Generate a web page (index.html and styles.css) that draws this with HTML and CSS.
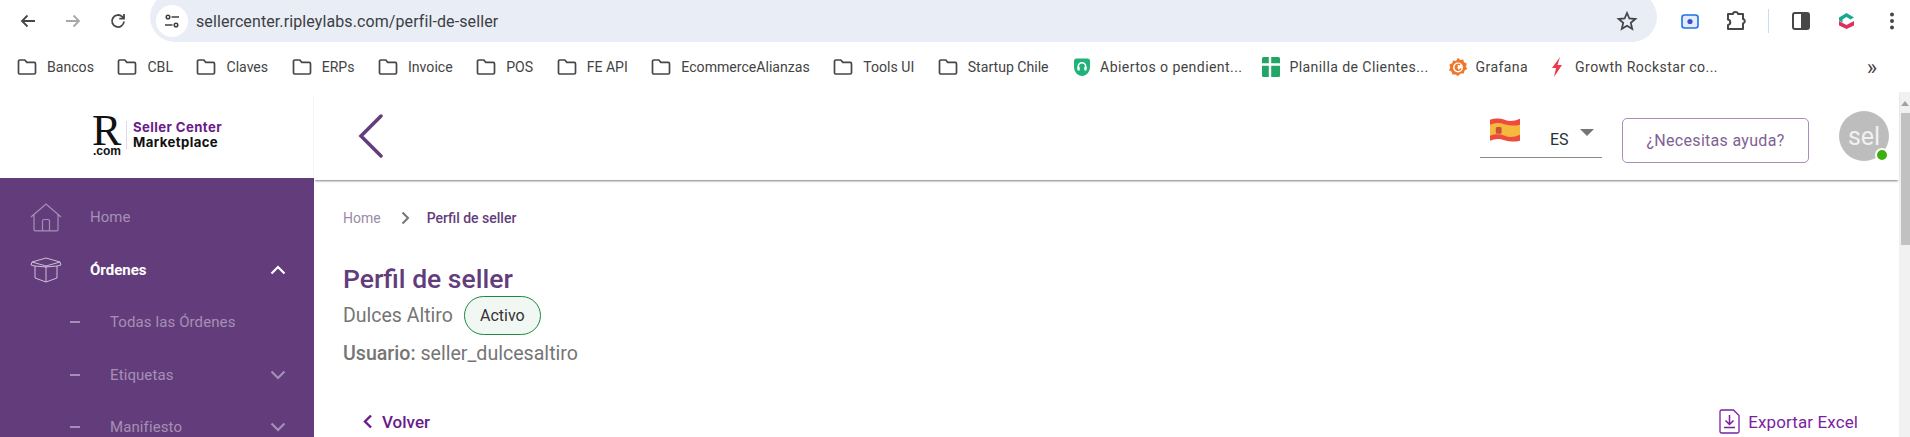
FILE: index.html
```html
<!DOCTYPE html>
<html lang="es">
<head>
    <meta charset="UTF-8">
    <title>Perfil de seller</title>
    <link rel="stylesheet" href="styles.css">
</head>
<body>
    <svg class="defs" width="0" height="0">
        <symbol id="folder" viewBox="0 0 20 18">
            <path d="M2.800 2h5l2 2.400h7.400c.7 0 1.300.6 1.300 1.300v9c0 .7-.6 1.300-1.300 1.300H2.800c-.7 0-1.300-.6-1.300-1.300V3.300C1.500 2.600 2.100 2 2.800 2z" fill="none" stroke="#474747" stroke-width="1.700"/>
        </symbol>
    </svg>

    <header class="browser">
        <div class="toolbar">
            <div class="nav-btns">
                <svg width="18" height="18" viewBox="0 0 18 18"><path d="M16 9H3M8.500 3.500 3 9l5.500 5.500" fill="none" stroke="#474747" stroke-width="1.800"/></svg>
                <svg width="18" height="18" viewBox="0 0 18 18"><path d="M2 9h13M9.500 3.500 15 9l-5.500 5.500" fill="none" stroke="#a8a8a8" stroke-width="1.800"/></svg>
                <svg width="18" height="18" viewBox="0 0 18 18"><path d="M15 9.500A6 6 0 1 1 13.200 4.700L15 6.500M15 2v4.700h-4.700" fill="none" stroke="#474747" stroke-width="1.800"/></svg>
            </div>
            <div class="omnibox">
                <span class="site-info">
                    <svg width="16" height="16" viewBox="0 0 16 16"><g fill="none" stroke="#3c4043" stroke-width="1.500"><circle cx="4" cy="4" r="1.800"/><path d="M7.500 4H15M1 12h7.500"/><circle cx="12" cy="12" r="1.800"/></g></svg>
                </span>
                <span class="url">sellercenter.ripleylabs.com/perfil-de-seller</span>
                <svg class="star" width="22" height="22" viewBox="0 0 22 22"><path d="m11 3 2.400 5.500 6 .5-4.600 3.900 1.400 5.900L11 15.700l-5.200 3.100 1.400-5.900L2.600 9l6-.5z" fill="none" stroke="#474747" stroke-width="1.800"/></svg>
            </div>
            <div class="ext-icons">
                <svg class="ext-cam" width="18" height="15" viewBox="0 0 18 15"><rect x="1" y="1" width="16" height="13" rx="2.500" fill="#e4ebfb" stroke="#1a73e8" stroke-width="1.600"/><circle cx="9" cy="7.500" r="2.600" fill="#3f51c8"/></svg>
                <svg class="ext-puzzle" width="22" height="20" viewBox="0 0 22 20"><path d="M3 3h5a2.500 2 0 0 1 5 0h5v5a2.300 2.300 0 0 1 0 4.500V18H3v-4a2.800 2.800 0 0 0 0-5.500z" fill="none" stroke="#474747" stroke-width="2" stroke-linejoin="round"/></svg>
                <span class="ext-sep"></span>
                <svg class="ext-panel" width="18" height="18" viewBox="0 0 18 18"><rect x="1" y="1" width="16" height="16" rx="2" fill="#fff" stroke="#474747" stroke-width="2"/><rect x="9" y="1" width="8" height="16" fill="#474747"/></svg>
                <svg class="ext-logo" width="17" height="18" viewBox="0 0 17 18"><path d="M1 5.500 8.500 1 16 5.500l-3.500 2-4-2.400-4 2.400v3L1 8.500z" fill="#1aa88e"/><path d="M1 9v4.500L8.500 17l7.500-3.500V9l-7.500 4z" fill="#e0305f"/></svg>
                <svg class="ext-dots" width="6" height="18" viewBox="0 0 6 18"><g fill="#474747"><circle cx="3" cy="2.500" r="2"/><circle cx="3" cy="9" r="2"/><circle cx="3" cy="15.500" r="2"/></g></svg>
            </div>
        </div>
        <nav class="bookmarks">
            <a class="bm"><svg><use href="#folder"/></svg>Bancos</a>
            <a class="bm"><svg><use href="#folder"/></svg>CBL</a>
            <a class="bm"><svg><use href="#folder"/></svg>Claves</a>
            <a class="bm"><svg><use href="#folder"/></svg>ERPs</a>
            <a class="bm"><svg><use href="#folder"/></svg>Invoice</a>
            <a class="bm"><svg><use href="#folder"/></svg>POS</a>
            <a class="bm"><svg><use href="#folder"/></svg>FE API</a>
            <a class="bm"><svg><use href="#folder"/></svg>EcommerceAlianzas</a>
            <a class="bm"><svg><use href="#folder"/></svg>Tools UI</a>
            <a class="bm"><svg><use href="#folder"/></svg>Startup Chile</a>
            <a class="bm bm-site"><svg viewBox="0 0 20 20"><path d="M2 4c0-1.500 1-2.500 2.500-2.500h11C17 1.500 18 2.500 18 4v6c0 5-4 9-8 9s-8-4-8-9z" fill="#20b27a"/><path d="M6.300 12V9.500a3.700 3.700 0 0 1 7.400 0V12" fill="none" stroke="#fff" stroke-width="1.600"/><rect x="5.500" y="10" width="2.200" height="3.500" fill="#fff"/><rect x="12.300" y="10" width="2.200" height="3.500" fill="#fff"/></svg>Abiertos o pendient...</a>
            <a class="bm bm-site"><svg viewBox="0 0 20 20"><rect x="1" y="0" width="18" height="20" rx="1.500" fill="#23a566"/><path d="M1 7.500h18M9 0v20" stroke="#fff" stroke-width="2.400"/></svg>Planilla de Clientes...</a>
            <a class="bm bm-site"><svg viewBox="0 0 20 20"><path d="m10 .8 2.200 2.200 3-.6.800 2.800 2.800 1.300-.8 2.900 1.200 2.700-2.600 1.500-.8 2.900-3-.1L10 19l-2.600-1.500-3 .1-.8-2.900L1 13.200l1.200-2.800-.8-2.800 2.800-1.300.8-2.800 3 .5z" fill="#f0772a"/><circle cx="10" cy="10.500" r="5" fill="#fff"/><path d="M13 11.500a3 3 0 1 1-1-3.600M10 12a1.500 1.500 0 0 1 0-3" fill="none" stroke="#f0772a" stroke-width="1.500"/></svg>Grafana</a>
            <a class="bm bm-site"><svg viewBox="0 0 20 20"><path d="M13 0 5 11h4l-2 9 8-12h-4.500z" fill="#f0384c"/></svg>Growth Rockstar co...</a>
            <span class="bm-more">»</span>
        </nav>
    </header>

    <div class="app">
        <aside class="sidebar">
            <div class="brand">
                <svg class="brand-mark" width="30" height="60" viewBox="0 0 30 60">
                    <text class="brand-r" x="-1" y="40">R</text>
                    <text class="brand-com" x="0" y="50">.com</text>
                </svg>
                <i class="brand-sep"></i>
                <div class="brand-text">
                    <span class="brand-sc">Seller Center</span>
                    <span class="brand-mp">Marketplace</span>
                </div>
            </div>
            <ul class="menu">
                <li class="menu-item">
                    <svg class="menu-icon" width="32" height="29" viewBox="0 0 32 29"><path d="M1 14 16 1l15 13M4 12v14.500c0 .8.500 1.300 1.300 1.300h21.400c.8 0 1.300-.5 1.300-1.300V12M12.500 28V18a1.500 1.500 0 0 1 1.500-1.500h4a1.500 1.500 0 0 1 1.500 1.500v10" fill="none" stroke="#a68fb6" stroke-width="1.200"/></svg>
                    <span>Home</span>
                </li>
                <li class="menu-item is-open">
                    <svg class="menu-icon" width="32" height="26" viewBox="0 0 32 26"><path d="M16 1 30 5 16 9 2 5zM5 9v12l11 4 11-4V9M16 9v16M2 5 1 8l4 1 11 1 11-1 4-1-1-3" fill="none" stroke="#d8cde0" stroke-width=".9"/></svg>
                    <span>Órdenes</span>
                    <svg class="chev" width="16" height="10" viewBox="0 0 16 10"><path d="m1.500 8.500 6.500-6.500 6.500 6.500" fill="none" stroke="#fff" stroke-width="2.200"/></svg>
                </li>
                <li class="menu-item sub"><i class="dash"></i><span>Todas las Órdenes</span></li>
                <li class="menu-item sub"><i class="dash"></i><span>Etiquetas</span>
                    <svg class="chev" width="16" height="10" viewBox="0 0 16 10"><path d="m1.500 1.500 6.500 6.500 6.500-6.500" fill="none" stroke="#a68fb6" stroke-width="2.200"/></svg>
                </li>
                <li class="menu-item sub"><i class="dash"></i><span>Manifiesto</span>
                    <svg class="chev" width="16" height="10" viewBox="0 0 16 10"><path d="m1.500 1.500 6.500 6.500 6.500-6.500" fill="none" stroke="#a68fb6" stroke-width="2.200"/></svg>
                </li>
            </ul>
        </aside>

        <div class="content">
            <div class="topbar">
                <svg class="back" width="26" height="44" viewBox="0 0 26 44"><path d="M23 2 3 22l20 20" fill="none" stroke="#633d7b" stroke-width="3.500" stroke-linecap="round"/></svg>
                <div class="lang">
                    <svg class="flag" width="30" height="24" viewBox="0 0 31 24"><path d="M0 2q8-3 15 0t16-1v21q-8 3-16 0T0 22z" fill="#f5b93c"/><path d="M0 1.500q8-3 15 0t16-1v6q-8 2-16-.5T0 6.500zM0 18q8-3 15 0t16-1v6q-8 2-16-.5T0 23z" fill="#ee4a3f"/><rect x="6" y="9" width="6" height="7" rx="1.500" fill="#c9503d"/></svg>
                    <span class="lang-code">ES</span>
                    <i class="lang-caret"></i>
                </div>
                <button class="help-btn">¿Necesitas ayuda?</button>
                <div class="avatar">sel<i class="avatar-dot"></i></div>
            </div>

            <main class="page">
                <div class="crumbs">
                    <span class="crumb-home">Home</span>
                    <svg width="9" height="14" viewBox="0 0 9 14"><path d="m1.500 1.500 5.500 5.500-5.500 5.500" fill="none" stroke="#757575" stroke-width="2"/></svg>
                    <span class="crumb-now">Perfil de seller</span>
                </div>
                <h1>Perfil de seller</h1>
                <div class="seller-row">
                    <span class="seller-name">Dulces Altiro</span>
                    <span class="badge">Activo</span>
                </div>
                <p class="seller-user"><strong>Usuario:</strong> seller_dulcesaltiro</p>
                <div class="actions">
                    <a class="volver">
                        <svg width="10" height="15" viewBox="0 0 10 15"><path d="M8 1.500 2 7.500l6 6" fill="none" stroke="#6a1b8a" stroke-width="2.400"/></svg>
                        Volver
                    </a>
                    <a class="export">
                        <svg width="21" height="25" viewBox="0 0 21 25"><path d="M2.500 1h12l5.500 5.500v16c0 .8-.7 1.500-1.500 1.500h-16c-.8 0-1.500-.7-1.500-1.500v-20C1 1.700 1.700 1 2.500 1z" fill="none" stroke="#7a1fa2" stroke-width="1.300"/><path d="M10.500 6v9M6.500 11.500l4 4 4-4M5 18.500h11" fill="none" stroke="#7a1fa2" stroke-width="1.500"/></svg>
                        Exportar Excel
                    </a>
                </div>
            </main>
        </div>

        <div class="scrollbar">
            <i class="scroll-up"></i>
            <i class="scroll-thumb"></i>
        </div>
    </div>
</body>
</html>
```

FILE: styles.css
```css
* {
    box-sizing: border-box;
}
html, body {
    margin: 0;
    height: 437px;
    overflow: hidden;
}
body {
    font-family: Roboto, "Liberation Sans", sans-serif;
    background: #fff;
    display: flex;
    flex-direction: column;
}
.defs {
    position: absolute;
}

/* browser chrome */
.browser {
    height: 92px;
    flex: none;
    background: #fff;
}
.toolbar {
    height: 42px;
    display: flex;
    align-items: center;
    padding-left: 19px;
    overflow: hidden;
}
.nav-btns {
    width: 131px;
    display: flex;
    gap: 27px;
}
.omnibox {
    width: 1507px;
    height: 50px;
    flex: none;
    margin-top: -8px;
    margin-bottom: -8px;
    padding: 8px 19px 0 6px;
    background: #e9edf6;
    border-radius: 25px;
    display: flex;
    align-items: center;
    position: relative;
    top: -4px;
}
.site-info {
    width: 32px;
    height: 32px;
    border-radius: 50%;
    background: #fff;
    display: flex;
    align-items: center;
    justify-content: center;
}
.url {
    flex: 1;
    margin-left: 8px;
    font-size: 16px;
    letter-spacing: .1px;
    color: #3c4043;
}
.ext-icons {
    flex: 1;
    display: flex;
    align-items: center;
    padding-left: 24px;
}
.ext-puzzle {
    margin-left: 26px;
}
.ext-sep {
    width: 1px;
    height: 24px;
    background: #c9dcf7;
    margin: 0 23px 0 21px;
}
.ext-logo {
    margin-left: 28px;
}
.ext-dots {
    margin-left: 34px;
}
.bookmarks {
    height: 50px;
    display: flex;
    align-items: center;
    padding-left: 17px;
    font-size: 14.100px;
    color: #444;
    position: relative;
}
.bm {
    display: flex;
    align-items: center;
    gap: 10px;
    margin-right: 23.500px;
    white-space: nowrap;
}
.bm svg {
    width: 20px;
    height: 18px;
}
.bm-site {
    gap: 8px;
    margin-right: 19px;
    letter-spacing: .4px;
}
.bm-site svg {
    height: 20px;
}
.bm-more {
    margin-left: auto;
    margin-right: 33px;
    font-size: 22px;
    color: #444;
}

/* app layout */
.app {
    flex: 1;
    display: flex;
    min-height: 0;
}
.sidebar {
    width: 314px;
    flex: none;
    display: flex;
    flex-direction: column;
}
.brand {
    height: 86px;
    flex: none;
    display: flex;
    align-items: center;
    padding-left: 93px;
}
.brand-r {
    font-family: "Liberation Serif", serif;
    font-size: 44px;
    fill: #111;
}
.brand-com {
    font-family: "Liberation Sans", sans-serif;
    font-weight: bold;
    font-size: 12px;
    fill: #111;
}
.brand-sep {
    width: 1px;
    height: 28px;
    margin: 0 6px 0 3px;
    background: #e3d8ea;
}
.brand-text {
    display: flex;
    flex-direction: column;
    font-family: Inter, sans-serif;
    font-weight: 700;
    font-size: 13.200px;
    letter-spacing: .4px;
    line-height: 15px;
}
.brand-sc {
    color: #6a1b8a;
}
.brand-mp {
    color: #111;
}
.menu {
    flex: 1;
    margin: 0;
    padding: 13px 0 0;
    list-style: none;
    background: #633d7b;
    color: #a68fb6;
    font-size: 15px;
}
.menu-item {
    height: 52.500px;
    display: flex;
    align-items: center;
    padding-left: 30px;
    position: relative;
}
.menu-icon {
    margin-right: 28px;
}
.is-open {
    color: #fff;
    font-weight: 700;
}
.sub {
    padding-left: 70px;
    letter-spacing: .1px;
}
.dash {
    width: 10px;
    height: 2px;
    background: #a68fb6;
    margin-right: 30px;
}
.chev {
    margin-left: auto;
    margin-right: 28px;
}

/* content */
.content {
    flex: 1;
    min-width: 0;
    display: flex;
    flex-direction: column;
}
.topbar {
    height: 88px;
    flex: none;
    display: flex;
    align-items: flex-start;
    padding: 0 10px 0 44px;
    box-shadow: 0 2px 2px -1px rgba(0, 0, 0, .5);
    position: relative;
}
.back {
    margin: 22px auto 0 0;
}
.lang {
    width: 122px;
    height: 51px;
    margin-right: 20px;
    margin-top: 15px;
    border-bottom: 1px solid #8a8a8a;
    position: relative;
    display: flex;
    padding-left: 10px;
}
.flag {
    margin-top: 11px;
}
.lang-code {
    margin: 23px 0 0 30px;
    font-size: 16px;
    color: #263238;
}
.lang-caret {
    width: 0;
    height: 0;
    margin: 22px 0 0 11px;
    border-left: 7px solid transparent;
    border-right: 7px solid transparent;
    border-top: 7px solid #757575;
}
.help-btn {
    width: 187px;
    height: 45px;
    margin-top: 26px;
    margin-right: 30px;
    background: #fff;
    border: 1px solid #a88fbb;
    border-radius: 5px;
    font-family: inherit;
    font-size: 16px;
    color: #7e6192;
    letter-spacing: .3px;
}
.avatar {
    width: 50px;
    height: 50px;
    margin-top: 19px;
    border-radius: 50%;
    background: #bdbdbd;
    color: #f1f1f1;
    font-size: 25px;
    display: flex;
    align-items: center;
    justify-content: center;
    position: relative;
}
.avatar-dot {
    position: absolute;
    right: 0;
    bottom: -1px;
    width: 14px;
    height: 14px;
    border-radius: 50%;
    background: #3fae0f;
    border: 2px solid #fff;
}
.page {
    flex: 1;
    padding: 28px 41px 0 29px;
    color: #757575;
}
.crumbs {
    display: flex;
    align-items: center;
    height: 20px;
    font-size: 14px;
}
.crumb-home {
    color: #9b8aa6;
}
.crumbs svg {
    margin: 0 17px 0 20px;
}
.crumb-now {
    color: #633d7b;
    font-weight: 500;
}
h1 {
    margin: 35px 0 0;
    font-size: 26.500px;
    line-height: 32px;
    font-weight: 500;
    color: #633d7b;
}
.seller-row {
    display: flex;
    align-items: center;
    height: 40px;
    gap: 11px;
    font-size: 19.500px;
}
.badge {
    width: 77px;
    height: 39px;
    border: 1px solid #1b8a3f;
    border-radius: 20px;
    background: #f1f7f3;
    color: #333;
    font-size: 16px;
    display: flex;
    align-items: center;
    justify-content: center;
}
.seller-user {
    margin: 7px 0 0;
    font-size: 19.600px;
    line-height: 24px;
}
.seller-user strong {
    font-weight: 500;
}
.actions {
    margin-top: 43px;
    padding-left: 20px;
    display: flex;
    justify-content: space-between;
    align-items: center;
}
.volver {
    display: flex;
    align-items: center;
    gap: 9px;
    color: #6a1b8a;
    font-size: 17px;
    font-weight: 500;
}
.export {
    display: flex;
    align-items: center;
    gap: 8px;
    color: #7a1fa2;
    font-size: 17px;
    letter-spacing: .1px;
}
.scrollbar {
    width: 11px;
    flex: none;
    background: #f1f1f1;
    display: flex;
    flex-direction: column;
    align-items: center;
    padding-top: 9px;
}
.scroll-up {
    width: 0;
    height: 0;
    border-left: 4px solid transparent;
    border-right: 4px solid transparent;
    border-bottom: 5px solid #a3a3a3;
}
.scroll-thumb {
    width: 9px;
    height: 132px;
    margin-top: 7px;
    align-self: flex-end;
    background: #c1c1c1;
}
```
